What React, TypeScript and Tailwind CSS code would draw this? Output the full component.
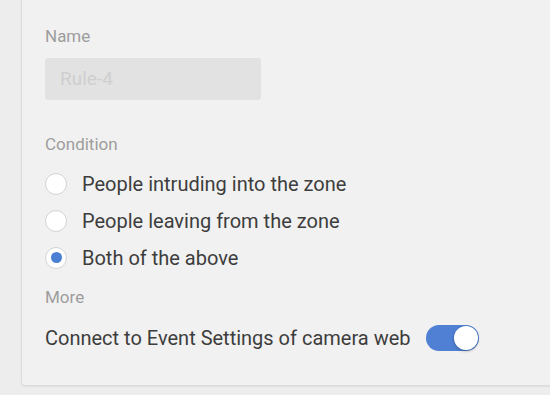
export default function App() {
  const options = [
    { label: 'People intruding into the zone', checked: false },
    { label: 'People leaving from the zone', checked: false },
    { label: 'Both of the above', checked: true },
  ];

  return (
    <div
      className="w-[550px] h-[395px] bg-[#ededed] overflow-hidden"
      style={{ fontFamily: 'Roboto, "Noto Sans", sans-serif' }}
    >
      <div className="ml-[21px] w-[560px] h-[386px] bg-[#f1f1f1] border-l border-b border-[#dcdcdc] rounded-bl-[4px] shadow-[0_1px_2px_rgba(0,0,0,0.06)] pl-[23px] pt-[26px]">
        {/* Name */}
        <p className="text-[17px] leading-[20px] text-[#9d9d9d]">Name</p>
        <div className="mt-[12px] w-[216px] h-[42px] rounded-[3px] bg-[#e2e2e2] flex items-center px-[15px]">
          <span className="text-[19px] text-[#cfcfcf]">Rule-4</span>
        </div>

        {/* Condition */}
        <p className="mt-[34px] text-[17px] leading-[20px] text-[#9d9d9d]">Condition</p>
        <div className="mt-[18px] flex flex-col gap-[14px]">
          {options.map((o) => (
            <label key={o.label} className="flex items-center gap-[15px] h-[23px]">
              <span className="w-[22px] h-[22px] rounded-full bg-white border border-[#d3d3d3] flex items-center justify-center">
                {o.checked && <span className="w-[11px] h-[11px] rounded-full bg-[#4a7fd4]" />}
              </span>
              <span className="text-[20px] text-[#3d3d3d]">{o.label}</span>
            </label>
          ))}
        </div>

        {/* More */}
        <p className="mt-[18px] text-[17px] leading-[20px] text-[#9d9d9d]">More</p>
        <div className="mt-[16px] flex items-center gap-[15px]">
          <span className="text-[20px] text-[#3d3d3d]">Connect to Event Settings of camera web</span>
          <span className="relative w-[53px] h-[26px] rounded-full bg-[#4f80d4]">
            <span className="absolute right-[1px] top-[1px] w-[24px] h-[24px] rounded-full bg-white shadow-[0_1px_3px_rgba(0,0,0,0.3)]" />
          </span>
        </div>
      </div>
    </div>
  );
}
